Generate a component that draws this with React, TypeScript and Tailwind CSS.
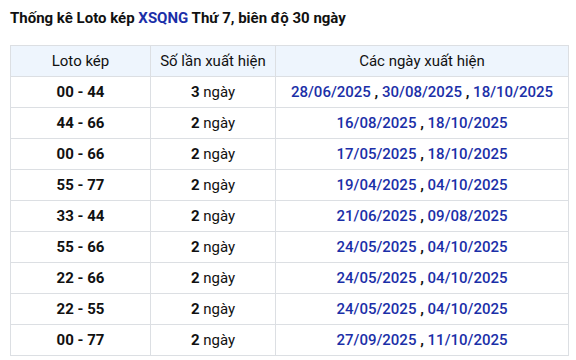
const rows: [string, number, string[]][] = [
  ["00 - 44", 3, ["28/06/2025", "30/08/2025", "18/10/2025"]],
  ["44 - 66", 2, ["16/08/2025", "18/10/2025"]],
  ["00 - 66", 2, ["17/05/2025", "18/10/2025"]],
  ["55 - 77", 2, ["19/04/2025", "04/10/2025"]],
  ["33 - 44", 2, ["21/06/2025", "09/08/2025"]],
  ["55 - 66", 2, ["24/05/2025", "04/10/2025"]],
  ["22 - 66", 2, ["24/05/2025", "04/10/2025"]],
  ["22 - 55", 2, ["24/05/2025", "04/10/2025"]],
  ["00 - 77", 2, ["27/09/2025", "11/10/2025"]],
];

export default function App() {
  return (
    <div className="w-[576px] h-[360px] bg-white px-[10px] pt-[8px] text-[#111] font-['Roboto',sans-serif]">
      <h2 className="text-[15px] font-bold leading-[20px]">
        Thống kê Loto kép <span className="text-[#1b2fa8]">XSQNG</span> Thứ 7, biên độ 30 ngày
      </h2>
      <table className="mt-[17px] w-[559px] border-collapse text-[15px] text-center">
        <thead>
          <tr className="h-[31px] bg-[#eef5fd]">
            <th className="w-[140px] border border-[#dcdfe3] font-normal">Loto kép</th>
            <th className="w-[125px] border border-[#dcdfe3] font-normal">Số lần xuất hiện</th>
            <th className="border border-[#dcdfe3] font-normal">Các ngày xuất hiện</th>
          </tr>
        </thead>
        <tbody>
          {rows.map(([pair, count, dates]) => (
            <tr key={pair + dates[0]} className="h-[31px]">
              <td className="border border-[#dcdfe3] font-bold">{pair}</td>
              <td className="border border-[#dcdfe3]">
                <span className="font-bold">{count}</span> ngày
              </td>
              <td className="border border-[#dcdfe3] font-medium">
                {dates.map((d, i) => (
                  <span key={d}>
                    {i > 0 && <span className="text-[#111] font-bold"> , </span>}
                    <span className="text-[#1b2fa8]">{d}</span>
                  </span>
                ))}
              </td>
            </tr>
          ))}
        </tbody>
      </table>
    </div>
  );
}
